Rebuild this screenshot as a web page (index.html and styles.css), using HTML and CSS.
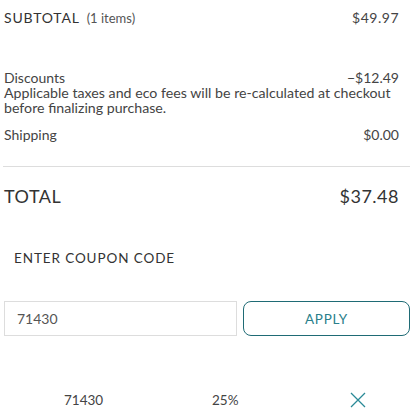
FILE: index.html
```html
<!DOCTYPE html>
<html lang="en">
<head>
    <meta charset="UTF-8">
    <meta name="viewport" content="width=device-width, initial-scale=1.0">
    <title>Order Summary</title>
    <link rel="stylesheet" href="styles.css">
</head>
<body>

<div class="summary">
    <div class="row subtotal">
        <span class="label">SUBTOTAL <span class="count">(1 items)</span></span>
        <span class="amount">$49.97</span>
    </div>

    <div class="row discounts">
        <span>Discounts</span>
        <span>&minus;$12.49</span>
    </div>
    <p class="note">Applicable taxes and eco fees will be re-calculated at checkout before finalizing purchase.</p>

    <div class="row shipping">
        <span>Shipping</span>
        <span>$0.00</span>
    </div>

    <div class="row total">
        <span>TOTAL</span>
        <span>$37.48</span>
    </div>
</div>

<div class="coupon">
    <h2>ENTER COUPON CODE</h2>
    <form class="coupon-form">
        <input type="text" value="71430">
        <button type="button">APPLY</button>
    </form>

    <div class="applied">
        <span class="code">71430</span>
        <span class="percent">25%</span>
        <button type="button" class="remove" aria-label="Remove coupon">
            <svg width="16" height="16" viewBox="0 0 16 16">
                <path d="M1 1 L15 15 M15 1 L1 15" stroke="#2a8a97" stroke-width="1.3" fill="none"/>
            </svg>
        </button>
    </div>
</div>

</body>
</html>
```

FILE: styles.css
```css
body {
    margin: 0;
    font-family: Lato, "Noto Sans", sans-serif;
    color: #444;
    background: #fff;
}
.summary {
    padding: 0 3px;
}
.row {
    display: flex;
    justify-content: space-between;
    align-items: center;
    padding: 0 11px 0 1px;
}
.subtotal {
    height: 35px;
    font-size: 14px;
}
.subtotal .label {
    letter-spacing: 0.8px;
    color: #333;
}
.subtotal .count {
    font-size: 13px;
    letter-spacing: 0;
    margin-left: 3px;
    color: #555;
}
.subtotal .amount {
    letter-spacing: 0.5px;
}
.discounts {
    margin-top: 34px;
    font-size: 14px;
    height: 16px;
}
.note {
    margin: 0;
    padding: 0 1px;
    font-size: 14.2px;
    line-height: 15px;
}
.shipping {
    margin-top: 10px;
    font-size: 14px;
    height: 18px;
    padding-bottom: 23px;
    border-bottom: 1px solid #ddd;
}
.total {
    height: 58px;
    font-size: 18px;
    letter-spacing: 0.5px;
    color: #333;
}
.coupon {
    padding: 0 3px 0 4px;
}
.coupon h2 {
    margin: 25px 0 0 10px;
    font-size: 13.5px;
    font-weight: normal;
    letter-spacing: 0.9px;
    color: #333;
}
.coupon-form {
    display: flex;
    gap: 6px;
    margin-top: 35px;
}
.coupon-form input {
    width: 233px;
    height: 35px;
    box-sizing: border-box;
    padding: 0 12px;
    border: 1px solid #ddd;
    font-family: inherit;
    font-size: 14px;
    color: #555;
}
.coupon-form button {
    flex: 1;
    height: 35px;
    border: 1.5px solid #1f6b75;
    border-radius: 8px;
    background: #fff;
    color: #2a7f8b;
    font-family: inherit;
    font-size: 13.5px;
    letter-spacing: 0.7px;
    cursor: pointer;
}
.applied {
    display: flex;
    align-items: center;
    height: 30px;
    margin-top: 49px;
    font-size: 13.5px;
}
.applied .code {
    margin-left: 60px;
    width: 148px;
}
.applied .percent {
    width: 138px;
}
.remove {
    border: none;
    background: none;
    padding: 0;
    display: flex;
    cursor: pointer;
}
```
